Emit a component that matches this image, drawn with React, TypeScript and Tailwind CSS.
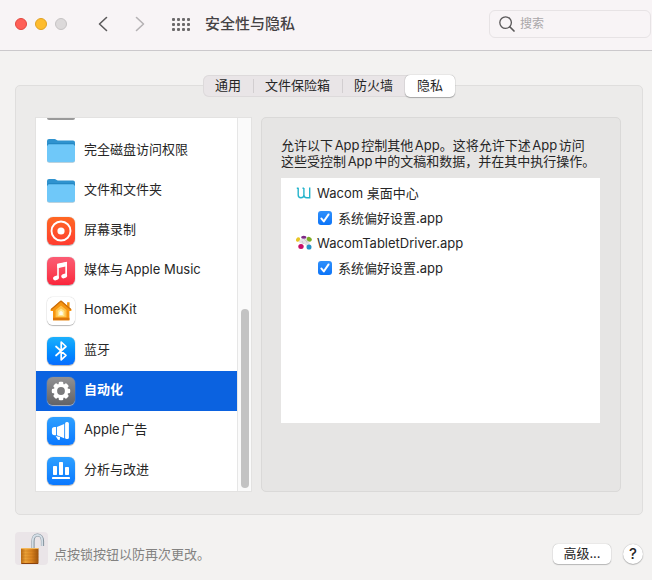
import * as React from 'react';
import { useState } from 'react';

const TABS = ['通用', '文件保险箱', '防火墙', '隐私'];

function FolderIcon() {
  return (
    <svg viewBox="0 1 28 28" className="size-7 shrink-0" aria-hidden="true">
      <path d="M0 5a2 2 0 0 1 2-2h5.500c1.500 0 2 1.400 3.500 1.400H26a2 2 0 0 1 2 2V12H0z" fill="#2f93cf" />
      <path d="M0 9.500h28v15a2.300 2.300 0 0 1-2.300 2.300H2.300A2.300 2.300 0 0 1 0 24.500z" fill="#a5c3d3" />
      <path d="M0 10.200A2.200 2.200 0 0 1 2.200 8h23.600a2.200 2.200 0 0 1 2.200 2.200v13.600a2.200 2.200 0 0 1-2.200 2.200H2.200A2.200 2.200 0 0 1 0 23.800z" fill="#6fc8f9" />
      <path d="M0 9.800C0 8.500 1 7.800 2.200 7.800h23.600c1.200 0 2.200.7 2.200 2" fill="none" stroke="#1e7fbb" strokeWidth=".8" />
    </svg>
  );
}

function RecordIcon() {
  return (
    <svg viewBox="0 0 28 28" className="size-7" aria-hidden="true">
      <circle cx="14" cy="14" r="9.500" fill="none" stroke="#fff" strokeWidth="1.900" />
      <circle cx="14" cy="14" r="3.600" fill="#fff" />
    </svg>
  );
}

function MusicIcon() {
  return (
    <svg viewBox="0 0 28 28" className="size-7" fill="#fff" aria-hidden="true">
      <path d="M10.200 7.300 20 5.100v13.700h-1.700V9.600l-6.500 1.500v9.900h-1.600z" />
      <path d="M10.200 6.800 20 4.800v3.700l-9.800 2.200z" />
      <ellipse cx="9" cy="21" rx="3" ry="2.200" transform="rotate(-18 9 21)" />
      <ellipse cx="17.200" cy="19" rx="3" ry="2.200" transform="rotate(-18 17.200 19)" />
    </svg>
  );
}

function HomeIcon() {
  return (
    <svg viewBox="0 0 28 28" className="size-7" aria-hidden="true">
      <path d="M14 3.500 3.800 12.200c-.8.800-.2 1.800.8 1.800H6v9.300h16.400V14h1.200c1 0 1.500-1 .7-1.700l-1.700-1.500V5.200h-2.500v3.500z" fill="#f6950f" />
      <path d="M6 20.800h16.400v2.500H6z" fill="#dc7608" />
      <path d="m14 4 9.800 8.500M14 4l-9.800 8.500" stroke="#c96d0b" strokeWidth="1.200" />
      <path d="M14 8.600 8.600 13v7.200h10.900V13z" fill="#ffc14b" />
      <path d="M14 11.400 10.700 14v5.200h6.700V14z" fill="#ffe58c" />
      <path d="m14 13.800-1.700 1.400v2.800h3.500v-2.800z" fill="#fffbe8" />
    </svg>
  );
}

function BluetoothIcon() {
  return (
    <svg viewBox="0 0 28 28" className="size-7" fill="none" stroke="#fff" strokeWidth="1.700" strokeLinejoin="round" strokeLinecap="round" aria-hidden="true">
      <path d="m9 9.500 10 8.800-4.800 4.500V5l4.800 4.500L9 18.500" />
    </svg>
  );
}

function GearIcon() {
  return (
    <svg viewBox="0 0 28 28" className="size-7" aria-hidden="true">
      <g fill="#fff">
        {[0, 45, 90, 135].map((angle) => (
          <rect key={angle} x="11.700" y="4.800" width="4.600" height="18.400" rx="1.300" transform={`rotate(${angle} 14 14)`} />
        ))}
        <circle cx="14" cy="14" r="7.300" />
      </g>
      <circle cx="14" cy="14" r="3.900" fill="#7b7b7d" />
    </svg>
  );
}

function MegaphoneIcon() {
  return (
    <svg viewBox="0 0 28 28" className="size-7" fill="#fff" aria-hidden="true">
      <path d="M9 10v8.200H7.500a2.600 2.600 0 0 1-2.600-2.600v-3A2.600 2.600 0 0 1 7.500 10z" />
      <path d="M9.900 9.900 17.200 7v14.300l-7.300-3z" />
      <rect x="18.100" y="5" width="3.800" height="17" rx="1.500" />
      <path d="m8.600 19 4.400 1-.2 2.200c-.1 1-1.300 1.200-2 .4z" />
    </svg>
  );
}

function ChartIcon() {
  return (
    <svg viewBox="0 0 28 28" className="size-7" fill="#fff" aria-hidden="true">
      <rect x="6" y="9" width="4" height="9" rx=".7" />
      <rect x="12" y="5" width="4" height="13" rx=".7" />
      <rect x="18" y="10" width="4" height="8" rx=".7" />
      <rect x="5" y="20" width="18" height="2" rx=".4" />
    </svg>
  );
}

interface Category {
  label: string;
  tile?: string;
  icon: React.ReactNode;
}

const CATEGORIES: Category[] = [
  { label: '完全磁盘访问权限', icon: <FolderIcon /> },
  { label: '文件和文件夹', icon: <FolderIcon /> },
  { label: '屏幕录制', tile: 'from-[#ff6722] to-[#ff3b30]', icon: <RecordIcon /> },
  { label: '媒体与Apple Music', tile: 'from-[#fb5c74] to-[#fa233b]', icon: <MusicIcon /> },
  { label: 'HomeKit', tile: 'from-white to-white', icon: <HomeIcon /> },
  { label: '蓝牙', tile: 'from-[#1cb0fc] to-[#0a6cff]', icon: <BluetoothIcon /> },
  { label: '自动化', tile: 'from-[#929294] to-[#636366]', icon: <GearIcon /> },
  { label: 'Apple广告', tile: 'from-[#2ea0ff] to-[#0a78ff]', icon: <MegaphoneIcon /> },
  { label: '分析与改进', tile: 'from-[#2ea0ff] to-[#0a78ff]', icon: <ChartIcon /> },
];

function WacomCenterIcon() {
  return (
    <svg viewBox="0 0 16 16" className="size-4" fill="none" stroke="#25b4cb" strokeWidth="1.400" aria-hidden="true">
      <path d="M2.200 3v7c0 2 1 2.700 2.700 2.700S7.900 12 7.900 10V3v7c0 2 1 2.700 2.900 2.700h2.900V2.500M.8 3.300h1.800M6.500 3.300H8" />
    </svg>
  );
}

function WacomDriverIcon() {
  return (
    <svg viewBox="0 0 16 16" className="size-4" aria-hidden="true">
      <path d="M4 4.500 8 3.500l4.500 2L14 9l-2.500 3L8.500 9 5 8.500 2.500 7z" fill="#e4e2e4" />
      <path d="m8 4 3 3M6 6l1.500 3M11 5v3" stroke="#bcb9bd" strokeWidth=".6" />
      <ellipse cx="2" cy="4.500" rx="1.800" ry="2.300" fill="#e8c526" transform="rotate(35 2 4.500)" />
      <ellipse cx="7.800" cy="2.200" rx="2.700" ry="1.500" fill="#7e2b86" />
      <ellipse cx="13.200" cy="4.200" rx="2.700" ry="2.200" fill="#7dac27" transform="rotate(35 13.200 4.200)" />
      <ellipse cx="5" cy="11.400" rx="2.700" ry="2.500" fill="#c60d68" />
      <ellipse cx="13" cy="12" rx="2.500" ry="2.600" fill="#2594c8" />
    </svg>
  );
}

function LockIcon() {
  return (
    <svg viewBox="0 0 33 33" className="size-[33px]" aria-hidden="true">
      <defs>
        <linearGradient id="brass" x1="0" x2="1">
          <stop offset="0" stopColor="#b96a13" />
          <stop offset=".25" stopColor="#eba238" />
          <stop offset=".6" stopColor="#db8420" />
          <stop offset="1" stopColor="#9c520c" />
        </linearGradient>
      </defs>
      <path d="M18 17V9.500C18 5 20 3 22.500 3s5 2 5 6v5" fill="none" stroke="#84929c" strokeWidth="3.200" />
      <path d="M17.700 17V9.500C17.700 5 20 3 22.500 3s4.700 2 4.700 6v5" fill="none" stroke="#d3dee6" strokeWidth="1.800" />
      <rect x="6" y="16" width="17.500" height="16" rx="1" fill="url(#brass)" />
      <path d="M6 19h17.500M6 22h17.500M6 25h17.500M6 28h17.500" stroke="#a85f10" strokeWidth=".7" opacity=".4" />
      <path d="M6 16.500h17.500" stroke="#f3b75b" />
      <path d="M6.500 31.500H23" stroke="#8b430c" />
    </svg>
  );
}

interface AppEntryProps {
  id: string;
  name: string;
  icon: React.ReactNode;
}

function AppEntry({ id, name, icon }: AppEntryProps) {
  const [allowed, setAllowed] = useState(true);

  return (
    <li>
      <div className="flex h-[25px] items-center gap-[5px] pl-[15px]">
        {icon}
        <span>{name}</span>
      </div>
      <div className="flex h-[25px] items-center gap-1.5 pl-[37px]">
        <span className="relative flex size-3.5">
          <input
            id={id}
            type="checkbox"
            checked={allowed}
            onChange={(e) => setAllowed(e.target.checked)}
            className="peer size-3.5 appearance-none rounded-[3px] border border-[#b5b5b5] bg-white checked:border-0 checked:bg-linear-to-b checked:from-[#2f90fb] checked:to-[#0a74f8]"
          />
          <svg viewBox="0 0 14 14" className="pointer-events-none absolute inset-0 hidden size-3.5 peer-checked:block" aria-hidden="true">
            <path d="m3.300 7.400 2.500 3 4.800-7" fill="none" stroke="#fff" strokeWidth="1.900" strokeLinecap="round" strokeLinejoin="round" />
          </svg>
        </span>
        <label htmlFor={id}>系统偏好设置.app</label>
      </div>
    </li>
  );
}

export default function App() {
  const [tab, setTab] = useState('隐私');
  const [category, setCategory] = useState('自动化');

  return (
    <div className="min-h-screen bg-[#f3f2f1] font-['Inter','Noto_Sans_CJK_SC',sans-serif] text-[13px] leading-4 text-[#262626] [text-autospace:normal]">
      {/* Window toolbar */}
      <header className="flex items-center border-b border-[#cbc9cc] bg-[#f8f4f6] pt-2.5 pr-px pb-3 pl-[15px]">
        <div className="flex gap-2">
          <button type="button" aria-label="关闭" className="size-3 rounded-full border border-[#e2463f] bg-[#ff5f57]" />
          <button type="button" aria-label="最小化" className="size-3 rounded-full border border-[#e0a123] bg-[#febc2e]" />
          <button type="button" aria-label="缩放" className="size-3 rounded-full border border-[#c6c3c4] bg-[#dcd9da]" />
        </div>
        <div className="ml-[31px] flex gap-[27px]">
          <button type="button" aria-label="后退">
            <svg viewBox="0 0 10 16" className="h-4 w-2.5" fill="none" stroke="#5c5a5b" strokeWidth="1.600" strokeLinecap="round" strokeLinejoin="round">
              <path d="M8.500 1.500 1.500 8l7 6.500" />
            </svg>
          </button>
          <button type="button" aria-label="前进">
            <svg viewBox="0 0 10 16" className="h-4 w-2.5" fill="none" stroke="#b5b2b4" strokeWidth="1.600" strokeLinecap="round" strokeLinejoin="round">
              <path d="m1.500 1.500 7 6.500-7 6.500" />
            </svg>
          </button>
        </div>
        <button type="button" aria-label="显示全部" className="ml-[27px] grid grid-cols-4 gap-0.5">
          {Array.from({ length: 12 }, (_, i) => (
            <span key={i} className="size-[3px] rounded-[1px] bg-[#6b696a]" />
          ))}
        </button>
        <h1 className="ml-[15px] text-[15px] leading-5 font-medium text-[#454244]">安全性与隐私</h1>
        <label className="ml-auto flex h-7 w-[162px] items-center gap-[5px] rounded-md border border-[#e7e3e5] pl-[9px]">
          <svg viewBox="0 0 16 16" className="size-4 shrink-0" fill="none" stroke="#5a5859" strokeLinecap="round" aria-hidden="true">
            <circle cx="6.600" cy="6.600" r="5.800" strokeWidth="1.300" />
            <path d="m11 11 4 4" strokeWidth="1.700" />
          </svg>
          <input type="search" aria-label="搜索" placeholder="搜索" className="w-full min-w-0 bg-transparent text-xs outline-none placeholder:text-[#aaa7a9]" />
        </label>
      </header>

      <main className="pt-6 pr-[9px] pl-[15px]">
        {/* Tabs sit on the top edge of the panel */}
        <div role="tablist" className="relative z-10 mx-auto -mb-3 flex h-[22px] w-fit rounded-md bg-[#e9e5e7] inset-ring inset-ring-[#dddadb]">
          {TABS.map((name, i) => (
            <React.Fragment key={name}>
              {(i === 1 || i === 2) && <span className="my-1 -mr-px w-px bg-[#d2ced0]" />}
              <button
                type="button"
                role="tab"
                aria-selected={tab === name}
                onClick={() => setTab(name)}
                className={`px-3 pb-0.5 ${
                  tab === name ? 'rounded-[5px] bg-white shadow-[0_0_1px_#888,0_1px_1px_#aaa]' : ''
                }`}
              >
                {name}
              </button>
            </React.Fragment>
          ))}
        </div>

        <section className="flex items-stretch gap-[9px] rounded-[5px] border border-[#dfdedd] bg-[#ecebea] pt-[31px] pr-[21px] pb-[22px] pl-[19px]">
          <nav className="flex w-[217px] shrink-0 border border-[#e3e2e1] bg-white">
            <ul className="min-w-0 flex-1">
              {/* Row scrolled mostly out of view */}
              <li className="h-[13px] pl-[11px]">
                <div className="h-0.5 w-7 rounded-b-xs bg-[#9a9a9a]" />
              </li>
              {CATEGORIES.map((item) => (
                <li key={item.label}>
                  <button
                    type="button"
                    onClick={() => setCategory(item.label)}
                    className={`flex h-10 w-full items-center gap-[9px] pl-[11px] text-left ${
                      category === item.label ? 'bg-[#0b62e0] font-bold text-white' : ''
                    }`}
                  >
                    {item.tile ? (
                      <span className={`size-7 shrink-0 rounded-[6px] bg-linear-to-b shadow-[0_0_1px_#999,0_1px_1px_#bbb] ${item.tile}`}>
                        {item.icon}
                      </span>
                    ) : (
                      item.icon
                    )}
                    <span className="pb-1">{item.label}</span>
                  </button>
                </li>
              ))}
            </ul>
            <div className="flex w-3.5 flex-col justify-end border-l border-[#e6e6e6] bg-[#fafafa] pr-0.5 pb-[3px] pl-[3px]">
              <div className="h-[48.500%] rounded-full bg-[#c3c3c3]" />
            </div>
          </nav>

          <div className="min-w-0 flex-1 rounded-[5px] border border-[#dad9d8] bg-[#e6e5e4] pt-[19px] pr-5 pl-[19px]">
            <p>
              允许以下App控制其他App。这将允许下述App访问
              <br />
              这些受控制App中的文稿和数据，并在其中执行操作。
            </p>
            <ul className="mt-[9px] min-h-[245px] bg-white pt-0.5">
              <AppEntry id="desktop-center" name="Wacom 桌面中心" icon={<WacomCenterIcon />} />
              <AppEntry id="tablet-driver" name="WacomTabletDriver.app" icon={<WacomDriverIcon />} />
            </ul>
          </div>
        </section>

        <footer className="flex items-center pt-[17px] pb-3.5">
          <button type="button" aria-label="锁定" className="rounded-[4px] bg-[#eae5e8]">
            <LockIcon />
          </button>
          <p className="ml-1.5 pt-2.5 text-[#838281]">点按锁按钮以防再次更改。</p>
          <button type="button" className="mt-2.5 ml-auto h-5 w-[58px] rounded-[5px] bg-white pb-0.5 shadow-[0_0_1px_#999,0_1px_1px_#bbb]">
            高级...
          </button>
          <button type="button" aria-label="帮助" className="mt-2.5 ml-3 size-5 rounded-full bg-white text-[15px] font-medium shadow-[0_0_1px_#999,0_1px_1px_#bbb]">
            ?
          </button>
        </footer>
      </main>
    </div>
  );
}
